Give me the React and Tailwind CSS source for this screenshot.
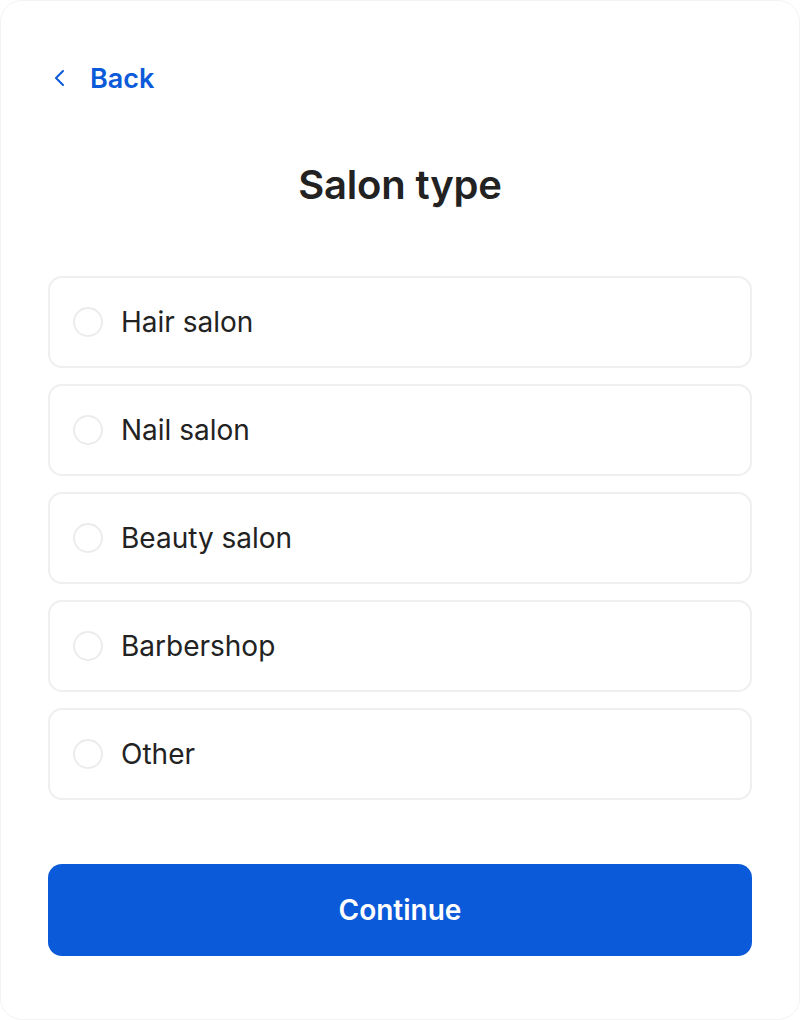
import { useState } from 'react';

const salonTypes = ['Hair salon', 'Nail salon', 'Beauty salon', 'Barbershop', 'Other'];

const ChevronLeft = () => (
    <svg width="14" height="20" viewBox="0 0 14 20" fill="none" stroke="currentColor" strokeWidth="2" strokeLinecap="round" strokeLinejoin="round">
        <path d="M10 3L3 10l7 7" />
    </svg>
);

export default function App() {
    const [selected, setSelected] = useState(null);

    return (
        <div className="w-[800px] h-[1020px] bg-white rounded-[22px] border border-[#f3f3f3] px-[47px] pt-[59px] font-['Inter',sans-serif] text-[#222222]">
            <button className="flex items-center gap-[23px] text-[#0b5ad9] h-9 pl-[5px]">
                <ChevronLeft />
                <span className="text-[27px] font-semibold leading-none">Back</span>
            </button>

            <h1 className="mt-[65px] text-center text-[40px] font-semibold leading-[48px] tracking-[-0.2px]">Salon type</h1>

            <div className="mt-[67px] flex flex-col gap-4">
                {salonTypes.map(type => (
                    <button
                        key={type}
                        onClick={() => setSelected(type)}
                        className="h-[92px] w-full flex items-center gap-[18px] px-[23px] rounded-[14px] border-2 border-[#efefef] bg-white text-left"
                    >
                        <span className={`w-[30px] h-[30px] rounded-full border-2 ${selected === type ? 'border-[#0b5ad9]' : 'border-[#ececec]'}`} />
                        <span className="text-[28px] leading-none">{type}</span>
                    </button>
                ))}
            </div>

            <button className="mt-16 h-[92px] w-full rounded-[14px] bg-[#0b5ad9] text-white text-[28px] font-semibold">
                Continue
            </button>
        </div>
    );
}
